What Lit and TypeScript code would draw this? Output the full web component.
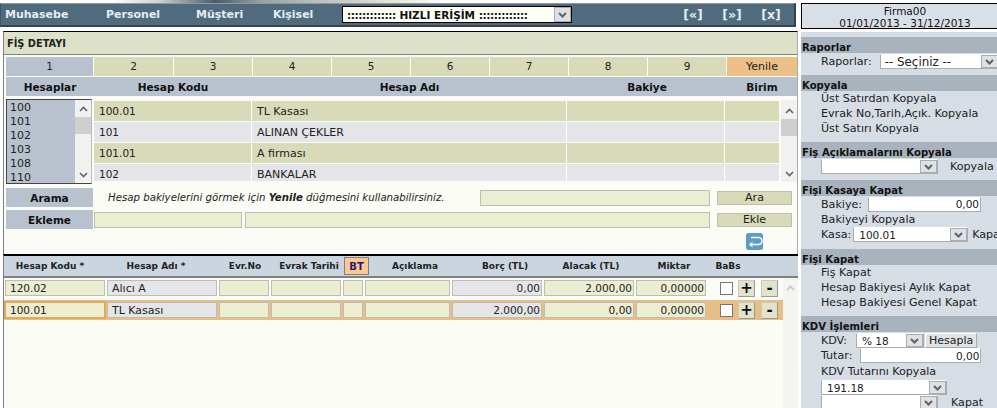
import { LitElement, html, css, svg } from "lit";
import { customElement } from "lit/decorators.js";

const arrow = svg`<svg width="9" height="6" viewBox="0 0 9 6"><path d="M1 1l3.5 3.5L8 1" fill="none" stroke="#5a6470" stroke-width="2"/></svg>`;
const upChev = svg`<svg width="9" height="6" viewBox="0 0 9 6"><path d="M1 5l3.5-3.5L8 5" fill="none" stroke="#5f656b" stroke-width="1.6"/></svg>`;
const downChev = svg`<svg width="9" height="6" viewBox="0 0 9 6"><path d="M1 1l3.5 3.5L8 1" fill="none" stroke="#5f656b" stroke-width="1.6"/></svg>`;

@customElement("app-root")
export class AppRoot extends LitElement {
  static styles = css`
    :host { display: block; width: 997px; height: 408px; overflow: hidden; background: #fff; font-family: "DejaVu Sans", Verdana, sans-serif; font-size: 10.5px; color: #222; }
    * { box-sizing: border-box; }
    .page { display: flex; width: 997px; height: 408px; overflow: hidden; }
    .main { width: 799px; flex: none; display: flex; flex-direction: column; }
    .strip { height: 3px; width: 796px; background: linear-gradient(90deg, #fff 0, #fff 14%, #cfd3d3 20%, #4a5a68 27%, #9aa3a3 33%, #e8e8dc 50%, #fff 56%); }
    .nav { height: 24px; width: 796px; background: #4f6b7d; border-top: 1px solid #8f9a9f; border-left: 1px solid #3f5666; border-right: 2px solid #36424c; border-bottom: 2px solid #36424c; display: flex; align-items: center; color: #e6edf2; font-weight: bold; font-size: 11px; }
    .nav .m { flex: none; }
    .m1 { width: 105px; padding-left: 4px; }
    .m2 { width: 90px; }
    .m3 { width: 77px; }
    .m4 { width: 69px; }
    .navsel { width: 230px; height: 17px; border: 1px solid #000; background: #fffff6; color: #111; display: flex; align-items: center; font-size: 10.5px; padding-left: 4px; white-space: nowrap; overflow: hidden; justify-content: space-between; }
    .colons { letter-spacing: -0.45px; }
    .navlinks { display: flex; margin-left: 111px; gap: 19px; font-size: 12.5px; }
    .navlinks span { width: 20px; text-align: center; white-space: nowrap; }
    .btn-arrow { flex: none; width: 17px; height: 100%; background: #dfe1e3; border: 1px solid #a9adb1; display: flex; align-items: center; justify-content: center; }
    .panel { margin: 4px 0 0 3px; width: 795px; height: 223px; background: #fbfcf5; border-left: 1px solid #808080; border-right: 1px solid #aaa; border-top: 1px solid #000; display: flex; flex-direction: column; }
    .title { height: 23px; flex: none; background: #dde1c8; border-bottom: 1px solid #808080; display: flex; align-items: center; padding-left: 3px; font-weight: bold; font-size: 9.8px; color: #222; }
    .tabs { display: grid; grid-template-columns: 88px 80px repeat(7, 79px) 70px; margin: 2px 0 0 2px; height: 20px; flex: none; }
    .tab { background: #d9dab8; border-right: 1px solid #fff; display: flex; align-items: center; justify-content: center; font-size: 10.5px; padding-bottom: 1px; height: 19px; }
    .tab.on { background: #b7c2ce; }
    .tab.y { background: #ecbf87; border-right: 0; font-size: 11px; }
    .heads { display: grid; grid-template-columns: 88px 158px 315px 160px 70px; margin: 0 0 0 2px; height: 19px; flex: none; background: #b7c2ce; font-weight: bold; align-items: center; color: #111; }
    .heads div { text-align: center; }
    .body { display: flex; margin: 3px 0 0 2px; gap: 2px; height: 85px; flex: none; }
    .list { width: 86px; flex: none; height: 100%; display: flex; border: 1px solid #444; border-right-color: #bbb; overflow: hidden; }
    .items { flex: 1; background: #b7c2ce; padding: 1px 0 0 3px; font-size: 11px; line-height: 14px; overflow: hidden; }
    .sb { width: 16px; flex: none; background: #f1f2f0; display: flex; flex-direction: column; align-items: center; justify-content: space-between; padding: 6px 0 5px; position: relative; }
    .thumb { position: absolute; left: 0; right: 0; top: 17px; height: 17px; background: #cfcfcf; }
    .grid { display: grid; width: 688px; grid-template-columns: 158px 315px 158px 57px; grid-auto-rows: 20px; row-gap: 1px; margin-top: 2px; overflow: hidden; height: 80px; }
    .grid div { padding-left: 5px; border-right: 1px solid #fff; display: flex; align-items: center; }
    .g1 { background: #d9dab8; }
    .g2 { background: #e4e5e9; }
    .tx { font-size: 11px; }
    .sb2 { width: 16px; flex: none; height: 82px; margin-top: 1px; position: relative; background: #f1f2f0; display: flex; flex-direction: column; align-items: center; justify-content: space-between; padding: 8px 0 5px; }
    .sb2 .thumb { top: 19px; }
    .frow { display: grid; grid-template-columns: 87px 1px 386px 230px 7px 75px; margin: 4px 0 0 2px; height: 19px; flex: none; align-items: center; }
    .flabel { background: #b7c2ce; height: 19px; font-weight: bold; display: flex; align-items: center; justify-content: center; color: #111; }
    .hint { padding-left: 14px; font-style: italic; font-size: 10.2px; white-space: nowrap; }
    .inp { background: #eceed2; border: 1px solid #bdbdb5; height: 16px; }
    .fbtn { background: #d9dab8; border: 1px solid #bdbdb0; height: 14px; display: flex; align-items: center; justify-content: center; font-size: 11px; }
    .row2 { display: grid; grid-template-columns: 87px 1px 148px 3px 465px 7px 75px; margin: 3px 0 0 2px; height: 19px; flex: none; align-items: center; }
    .iconrow { display: flex; justify-content: flex-end; padding-right: 34px; margin-top: 4px; }
    .det { flex: 1; margin-left: 3px; width: 795px; display: flex; flex-direction: column; border-left: 1px solid #808080; background: #fbfcf5; border-top: 2px solid #000; }
    .dhead { height: 22px; flex: none; background: #cbd5df; border-bottom: 2px solid #808080; display: grid; align-items: center; font-weight: bold; color: #222; font-size: 9px; }
    .cols { grid-template-columns: 92px 120px 58px 70px 25px 92px 88px 84px 82px 26px; }
    .dhead div { text-align: center; white-space: nowrap; }
    .dbody { flex: 1; display: flex; }
    .drows { flex: 1; display: flex; flex-direction: column; }
    .drow { display: grid; grid-template-columns: 100px 110px 50px 70px 20px 85px 90px 90px 70px 1fr; column-gap: 2px; padding-left: 1px; height: 20px; align-items: center; }
    .drow.on { background: #e8bd86; margin-top: 2px; }
    .cell { height: 16px; border: 1px solid #bdbdb5; background: #eceed2; padding: 0 1px 0 4px; display: flex; align-items: center; font-size: 10.5px; white-space: nowrap; }
    .cell.tx { font-size: 11px; }
    .cell.gr { background: #e4e5e9; }
    .cell.r { justify-content: flex-end; }
    .cell.foc { border: 1px solid #e1a956; outline: 1px solid #e1a956; }
    .acts { display: flex; align-items: center; margin-left: 12px; }
    .chk { width: 13px; height: 13px; background: #fff; border: 1px solid #777; flex: none; }
    .pm { width: 17px; height: 17px; background: #e0e4cd; border: 1px solid #c9cbb8; border-right-color: #999; border-bottom-color: #999; margin-left: 5px; display: flex; align-items: center; justify-content: center; font-size: 15px; font-weight: bold; line-height: 1; color: #111; }
    .pm + .pm { margin-left: 6px; }
    .sb3 { width: 15px; flex: none; background: #f4f5f1; display: flex; justify-content: center; padding-top: 7px; }
    .bt { background: #ffc78f; border: 1px solid #808080; height: 18px; color: #1a1a7a; display: flex; align-items: center; justify-content: center; font-size: 10px; }

    .side { width: 198px; flex: none; padding: 3px 0 0 2px; display: flex; flex-direction: column; overflow: hidden; }
    .shead { width: 208px; height: 26px; background: #d8dfe7; border: 1px solid #000; text-align: center; line-height: 12px; font-size: 10.5px; padding-top: 1px; flex: none; color: #111; }
    .sbody { margin-top: 3px; background: #d6dde5; flex: 1; padding-top: 5px; width: 196px; overflow: hidden; font-size: 11.1px; }
    .h { height: 16px; background: #a8b3bd; font-weight: bold; padding-left: 1px; display: flex; align-items: flex-end; font-size: 10.1px; color: #111; white-space: nowrap; }
    .ln { height: 15px; padding-left: 20px; display: flex; align-items: center; white-space: nowrap; }
    .sel { background: #fff; height: 15px; border: 1px solid #a8adb2; border-top-color: #fff; display: flex; align-items: center; justify-content: space-between; padding-left: 5px; flex: none; font-size: 10.5px; }
    .sb-arr { width: 17px; height: 100%; background: #dfe1e3; border: 1px solid #a9adb1; display: flex; align-items: center; justify-content: center; flex: none; }
    .rowf { display: flex; align-items: center; padding-left: 20px; white-space: nowrap; height: 15px; }
    .val { background: #fff; border: 1px solid #a8adb2; border-top-color: #fff; height: 15px; display: flex; align-items: center; justify-content: flex-end; padding-right: 1px; flex: none; font-size: 10.5px; }
    .hes { flex: none; height: 15px; width: 52px; background: #dfe3e6; border: 1px solid #aaa; border-left-color: #fff; border-top-color: #fff; display: flex; align-items: center; justify-content: center; font-size: 11px; margin-left: 1px; }
    .rap { margin: 1px 0 6px; gap: 8px; }
    .rap .sel { font-size: 11.9px; padding-left: 4px; }
    .kop { margin: 1px 0 6px; gap: 12px; }
    .bak { gap: 6px; height: 16px; }
    .kas { gap: 2px; margin-bottom: 7px; }
    .kasa-k { margin-left: 2px; }
    .kdv { margin-top: 1px; }
    .kdv-l { margin-right: 9px; }
    .tut { gap: 8px; }
    .top6 { margin-top: 6px; }
    .top1 { margin-top: 1px; }
    .last { gap: 13px; }
  `;

  select(text: string, width: number) {
    return html`<div class="sel" style="width:${width}px"><span>${text}</span><div class="sb-arr">${arrow}</div></div>`;
  }

  render() {
    const rows = [
      ["100.01", "TL Kasası", "g1"],
      ["101", "ALINAN ÇEKLER", "g2"],
      ["101.01", "A firması", "g1"],
      ["102", "BANKALAR", "g2"],
    ];
    return html`<div class="page">
      <div class="main">
        <div class="strip"></div>
        <div class="nav">
          <div class="m m1">Muhasebe</div><div class="m m2">Personel</div><div class="m m3">Müşteri</div><div class="m m4">Kişisel</div>
          <div class="navsel"><span><span class="colons">:::::::::::::</span> HIZLI ERİŞİM <span class="colons">:::::::::::::</span></span><div class="btn-arrow">${arrow}</div></div>
          <div class="navlinks"><span>[«]</span><span>[»]</span><span>[x]</span></div>
        </div>
        <div class="panel">
          <div class="title">FİŞ DETAYI</div>
          <div class="tabs">
            <div class="tab on">1</div>${[2, 3, 4, 5, 6, 7, 8, 9].map((n) => html`<div class="tab">${n}</div>`)}<div class="tab y">Yenile</div>
          </div>
          <div class="heads"><div>Hesaplar</div><div>Hesap Kodu</div><div>Hesap Adı</div><div>Bakiye</div><div>Birim</div></div>
          <div class="body">
            <div class="list">
              <div class="items">100<br />101<br />102<br />103<br />108<br />110</div>
              <div class="sb">${upChev}<div class="thumb"></div>${downChev}</div>
            </div>
            <div class="grid">
              ${rows.map((r) => html`<div class=${r[2]}>${r[0]}</div><div class=${r[2] + " tx"}>${r[1]}</div><div class=${r[2]}></div><div class=${r[2]}></div>`)}
            </div>
            <div class="sb2">${upChev}<div class="thumb"></div>${downChev}</div>
          </div>
          <div class="frow">
            <div class="flabel">Arama</div><div></div>
            <div class="hint">Hesap bakiyelerini görmek için <b>Yenile</b> düğmesini kullanabilirsiniz.</div>
            <div class="inp"></div><div></div><div class="fbtn">Ara</div>
          </div>
          <div class="row2">
            <div class="flabel">Ekleme</div><div></div>
            <div class="inp"></div><div></div><div class="inp"></div><div></div><div class="fbtn">Ekle</div>
          </div>
          <div class="iconrow">
            <svg width="17" height="17" viewBox="0 0 17 17"><rect x="0" y="0" width="17" height="17" rx="2.5" fill="#5c9dc8"/><path d="M3.5 11.5h9a2 2 0 0 0 0-7H5" fill="none" stroke="#fff" stroke-width="1.4"/><path d="M6.5 8.5l-3.3 3 3.3 3z" fill="#fff"/></svg>
          </div>
        </div>
        <div class="det">
          <div class="dhead cols">
            <div>Hesap Kodu *</div><div>Hesap Adı *</div><div>Evr.No</div><div>Evrak Tarihi</div><div class="bt">BT</div><div>Açıklama</div><div>Borç (TL)</div><div>Alacak (TL)</div><div>Miktar</div><div>BaBs</div>
          </div>
          <div class="dbody">
            <div class="drows">
              <div class="drow">
                <div class="cell">120.02</div><div class="cell gr tx">Alıcı A</div><div class="cell"></div><div class="cell"></div><div class="cell"></div><div class="cell"></div><div class="cell gr r">0,00</div><div class="cell r">2.000,00</div><div class="cell r">0,00000</div>
                <div class="acts"><div class="chk"></div><div class="pm">+</div><div class="pm">-</div></div>
              </div>
              <div class="drow on">
                <div class="cell foc">100.01</div><div class="cell gr tx">TL Kasası</div><div class="cell"></div><div class="cell"></div><div class="cell"></div><div class="cell"></div><div class="cell gr r">2.000,00</div><div class="cell r">0,00</div><div class="cell r">0,00000</div>
                <div class="acts"><div class="chk"></div><div class="pm">+</div><div class="pm">-</div></div>
              </div>
            </div>
            <div class="sb3"><svg width="9" height="6" viewBox="0 0 9 6"><path d="M1 5l3.5-3.5L8 5" fill="none" stroke="#c4c8c4" stroke-width="1.6"/></svg></div>
          </div>
        </div>
      </div>
      <div class="side">
        <div class="shead">Firma00<br />01/01/2013 - 31/12/2013</div>
        <div class="sbody">
          <div class="h">Raporlar</div>
          <div class="rowf rap">Raporlar: ${this.select("-- Seçiniz --", 119)}</div>
          <div class="h">Kopyala</div>
          <div class="ln">Üst Satırdan Kopyala</div><div class="ln">Evrak No,Tarih,Açık. Kopyala</div><div class="ln">Üst Satırı Kopyala</div>
          <div class="h top6">Fiş Açıklamalarını Kopyala</div>
          <div class="rowf kop">${this.select("", 117)}<span>Kopyala</span></div>
          <div class="h">Fişi Kasaya Kapat</div>
          <div class="rowf bak">Bakiye: <div class="val" style="width:113px">0,00</div></div>
          <div class="ln">Bakiyeyi Kopyala</div>
          <div class="rowf kas">Kasa: ${this.select("100.01", 115)}<span class="kasa-k">Kapat</span></div>
          <div class="h">Fişi Kapat</div>
          <div class="ln">Fiş Kapat</div><div class="ln">Hesap Bakiyesi Aylık Kapat</div><div class="ln">Hesap Bakiyesi Genel Kapat</div>
          <div class="h top6">KDV İşlemleri</div>
          <div class="rowf kdv"><span class="kdv-l">KDV:</span>${this.select("% 18", 68)}<div class="hes">Hesapla</div></div>
          <div class="rowf tut">Tutar: <div class="val" style="width:121px">0,00</div></div>
          <div class="ln top1">KDV Tutarını Kopyala</div>
          <div class="rowf top1">${this.select("191.18", 126)}</div>
          <div class="rowf last">${this.select("", 117)}<span>Kapat</span></div>
        </div>
      </div>
    </div>`;
  }
}
